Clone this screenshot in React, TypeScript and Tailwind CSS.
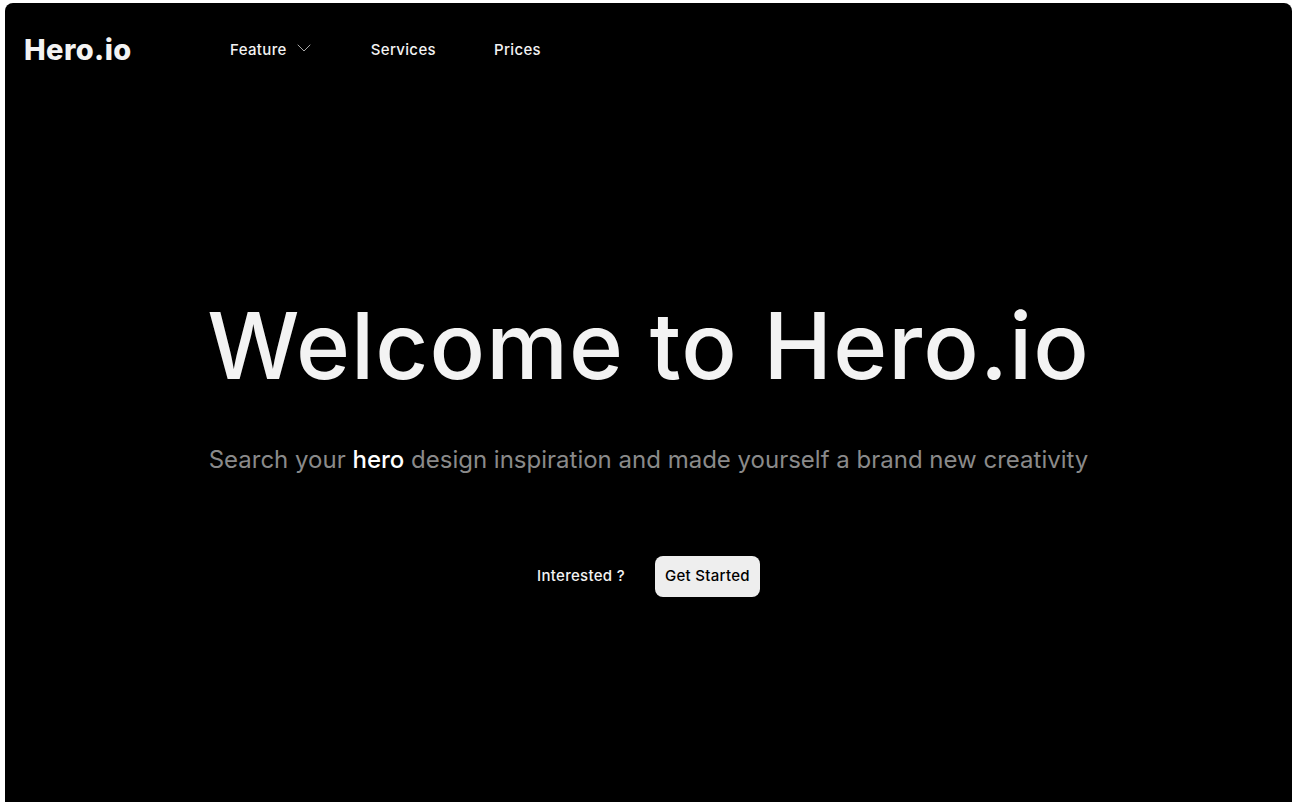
import { ChevronDown } from "lucide-react"

export default function App() {
    return (
        <div className="min-h-screen bg-white pl-[5px] pr-[4px] pt-[3px]" style={{ fontFamily: "Inter, 'Noto Sans', sans-serif" }}>
            <div className="h-[799px] bg-black rounded-t-lg flex flex-col text-[#f3f3f3]">
                <header className="flex items-center h-[94px] pl-[19px]">
                    <a className="text-[29px] font-extrabold tracking-[0.4px] w-[206px]">Hero.io</a>
                    <nav className="flex items-center text-[15px] font-medium tracking-[0.35px]">
                        <button className="flex items-center gap-[5px] mr-[55px]">
                            Feature
                            <ChevronDown size={24} strokeWidth={0.9} className="text-[#bbb] -mt-[4px]" />
                        </button>
                        <a className="mr-[58px]">Services</a>
                        <a>Prices</a>
                    </nav>
                </header>

                <section className="flex flex-col items-center pt-[203px]">
                    <h1 className="text-[92px] leading-none font-medium tracking-[1.1px]">
                        Welcome to Hero.io
                    </h1>
                    <p className="mt-[50px] text-[24px] text-[#8a8a8a]">
                        Search your <span className="text-white font-medium">hero</span> design inspiration and made yourself a brand new creativity
                    </p>
                    <div className="mt-[78px] flex items-center gap-[30px] text-[15px] font-medium tracking-[0.3px]">
                        <span>Interested ?</span>
                        <button className="h-[41px] px-[10px] rounded-lg bg-[#eeeeee] text-black">
                            Get Started
                        </button>
                    </div>
                </section>
            </div>
        </div>
    )
}
